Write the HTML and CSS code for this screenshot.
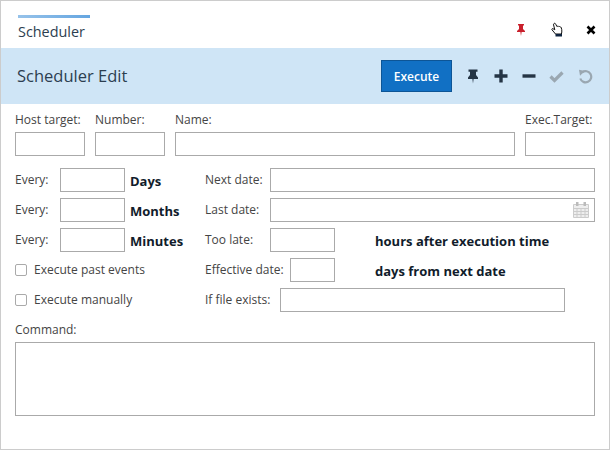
FILE: index.html
```html
<!DOCTYPE html>
<html lang="en">
<head>
  <meta charset="UTF-8">
  <title>Scheduler</title>
  <link rel="stylesheet" href="styles.css">
</head>
<body>
  <div class="window">
    <div class="titlebar">
      <div class="tab">Scheduler</div>
      <div class="window-icons">
        <svg class="pin-red" width="12" height="14" viewBox="0 0 12 14"><path d="M3 1h6v1.500H8v3.500l2 2v1H6.600L6 13 5.400 9H2V8l2-2V2.500H3z" fill="#c9202c"/></svg>
        <svg width="14" height="16" viewBox="0 0 14 16"><path d="M4 1.500c.8-.6 1.500 0 1.800.8L7 4.700l.6-.5c.6-.3 1 0 1.200.4.500-.3 1-.1 1.200.4.600-.2 1 0 1.200.5.500 1.400.8 3 .6 4.500l-.4 2H5.500L2 7.800c-.5-.7.200-1.500 1-1.100l1.800 1.100L3.600 3c-.2-.6 0-1.200.4-1.500z" fill="#fff" stroke="#111" stroke-width="1"/><rect x="5.500" y="12" width="6.500" height="2.500" fill="#10243f"/></svg>
        <svg class="close" width="10" height="10" viewBox="0 0 10 10"><path d="M1.500 1.500l7 7M8.500 1.500l-7 7" stroke="#000" stroke-width="2.600"/></svg>
      </div>
    </div>

    <div class="header">
      <h1>Scheduler Edit</h1>
      <div class="toolbar">
        <button class="btn-execute">Execute</button>
        <svg class="tool-pin" width="12" height="15" viewBox="0 0 12 15"><path d="M1.500 .5h9v2.200H9v3.300l2 2.500v1.500H6.600L6 14.500 5.400 10H1V8.500L3 6V2.700H1.500z" fill="#253545"/></svg>
        <svg class="tool-plus" width="14" height="14" viewBox="0 0 14 14"><path d="M5.300 .5h3.400v4.800h4.800v3.400H8.700v4.800H5.300V8.700H.5V5.300h4.800z" fill="#253545"/></svg>
        <svg class="tool-minus" width="14" height="14" viewBox="0 0 14 14"><rect x=".5" y="5.300" width="13" height="3.400" fill="#253545"/></svg>
        <svg class="tool-check" width="15" height="14" viewBox="0 0 15 14"><path d="M1.500 7.500l4 4 8-8" fill="none" stroke="#9aa7b1" stroke-width="3.200"/></svg>
        <svg class="tool-undo" width="15" height="15" viewBox="0 0 15 15"><path d="M4.200 3.300A5.600 5.600 0 1 1 2.300 9.500" fill="none" stroke="#9aa7b1" stroke-width="2.200"/><path d="M1 .8l6 1.200L2 6.800z" fill="#9aa7b1"/></svg>
      </div>
    </div>

    <form class="form">
      <div class="top-fields">
        <label class="field w-small">Host target:<input type="text"></label>
        <label class="field w-small">Number:<input type="text"></label>
        <label class="field w-grow">Name:<input type="text"></label>
        <label class="field w-small">Exec.Target:<input type="text"></label>
      </div>

      <div class="row">
        <div class="left">
          <span class="lbl-every">Every:</span><input class="in-every" type="text"><b>Days</b>
        </div>
        <span class="lbl-right">Next date:</span>
        <input class="in-grow" type="text">
      </div>
      <div class="row">
        <div class="left">
          <span class="lbl-every">Every:</span><input class="in-every" type="text"><b>Months</b>
        </div>
        <span class="lbl-right">Last date:</span>
        <div class="date-wrap">
          <input type="text">
          <svg class="cal" width="16" height="17" viewBox="0 0 16 17"><path d="M.5 3.500h15v13H.5z" fill="#eee" stroke="#ccc"/><path d="M.5 7.500h15M.5 10.500h15M.5 13.500h15M4 7v9M8 7v9M12 7v9" stroke="#ccc" fill="none"/><rect x="3" y="1" width="2.500" height="4" fill="#bbb"/><rect x="10.500" y="1" width="2.500" height="4" fill="#bbb"/></svg>
        </div>
      </div>
      <div class="row">
        <div class="left">
          <span class="lbl-every">Every:</span><input class="in-every" type="text"><b>Minutes</b>
        </div>
        <span class="lbl-right">Too late:</span>
        <input class="in-late" type="text">
        <b class="note">hours after execution time</b>
      </div>
      <div class="row">
        <label class="left check"><span class="box"></span>Execute past events</label>
        <span class="lbl-right lbl-eff">Effective date:</span>
        <input class="in-eff" type="text">
        <b class="note">days from next date</b>
      </div>
      <div class="row">
        <label class="left check"><span class="box"></span>Execute manually</label>
        <span class="lbl-right lbl-file">If file exists:</span>
        <input class="in-file" type="text">
      </div>

      <label class="command">Command:<textarea></textarea></label>
    </form>
  </div>
</body>
</html>
```

FILE: styles.css
```css
* {
  box-sizing: border-box;
}

body {
  margin: 0;
  font-family: "Open Sans", sans-serif;
  font-size: 12px;
  color: #444;
  background: #fff;
}

.window {
  width: 610px;
  height: 450px;
  border: 1px solid #ccc;
  overflow: hidden;
}

.titlebar {
  height: 47px;
  padding: 14px 0 0 17px;
  display: flex;
  justify-content: space-between;
}

.tab {
  width: 72px;
  height: 26px;
  border-top: 3px solid;
  border-image: linear-gradient(to right, #97c3ea, #64a5e0) 1;
  font-size: 14.400px;
  line-height: 27px;
  color: #2c3e50;
}

.window-icons {
  display: flex;
  align-items: center;
  gap: 21px;
  height: 28px;
  padding: 2px 13px 0 0;
}

.window-icons .pin-red {
  margin-right: 2px;
}

.window-icons .close {
  margin-left: 1px;
}

.header {
  height: 56px;
  background: #cfe5f6;
  display: flex;
  align-items: center;
  justify-content: space-between;
  padding: 0 16px;
}

.header h1 {
  margin: -2px 0 0;
  font-size: 16.500px;
  font-weight: 400;
  color: #2c3e50;
}

.toolbar {
  display: flex;
  align-items: center;
  gap: 14px;
}

.btn-execute {
  width: 71px;
  height: 32px;
  margin-right: 1px;
  padding: 0;
  background: #1170c4;
  border: 1px solid #0d5596;
  color: #fff;
  font-family: "Open Sans", sans-serif;
  font-size: 12px;
  font-weight: 600;
}

.tool-plus {
  margin-left: 1px;
}

.tool-check {
  margin-left: -1px;
}

.form {
  padding: 8px 14px 0;
}

input,
textarea {
  display: block;
  height: 24px;
  border: 1px solid #aaa;
  border-radius: 0;
  background: #fff;
  padding: 0;
  margin: 0;
}

.top-fields {
  display: flex;
  gap: 10px;
  margin-bottom: 12px;
}

.field {
  display: block;
  line-height: 16px;
  white-space: nowrap;
}

.field input {
  width: 100%;
  margin-top: 4px;
}

.w-small {
  width: 70px;
}

.w-grow {
  flex: 1;
}

.row {
  display: flex;
  align-items: center;
  height: 24px;
  margin-bottom: 6px;
}

.left {
  width: 190px;
  display: flex;
  align-items: center;
}

.lbl-every {
  width: 45px;
  margin-top: -2px;
}

.in-every {
  width: 65px;
}

.row b {
  font-size: 13px;
  font-weight: 700;
  color: #111c2b;
  margin: 2px 0 0 5px;
}

.lbl-right {
  width: 65px;
  white-space: nowrap;
  flex-shrink: 0;
  margin-top: -2px;
}

.row .lbl-eff {
  width: 85px;
}

.row .lbl-file {
  width: 75px;
}

.in-grow,
.date-wrap {
  flex: 1;
}

.date-wrap {
  position: relative;
}

.date-wrap input {
  width: 100%;
}

.cal {
  position: absolute;
  right: 6px;
  top: 3px;
}

.in-late {
  width: 65px;
}

.in-eff {
  width: 45px;
}

.in-file {
  width: 285px;
}

.row .note {
  margin-left: 40px;
}

.check {
  gap: 7px;
  margin-top: -1px;
}

.box {
  width: 12px;
  height: 12px;
  border: 1px solid #aaa;
  border-radius: 2px;
  background: #fff;
}

.command {
  display: block;
  margin-top: 10px;
  line-height: 16px;
}

.command textarea {
  width: 580px;
  height: 74px;
  margin-top: 4px;
  resize: none;
}
```
